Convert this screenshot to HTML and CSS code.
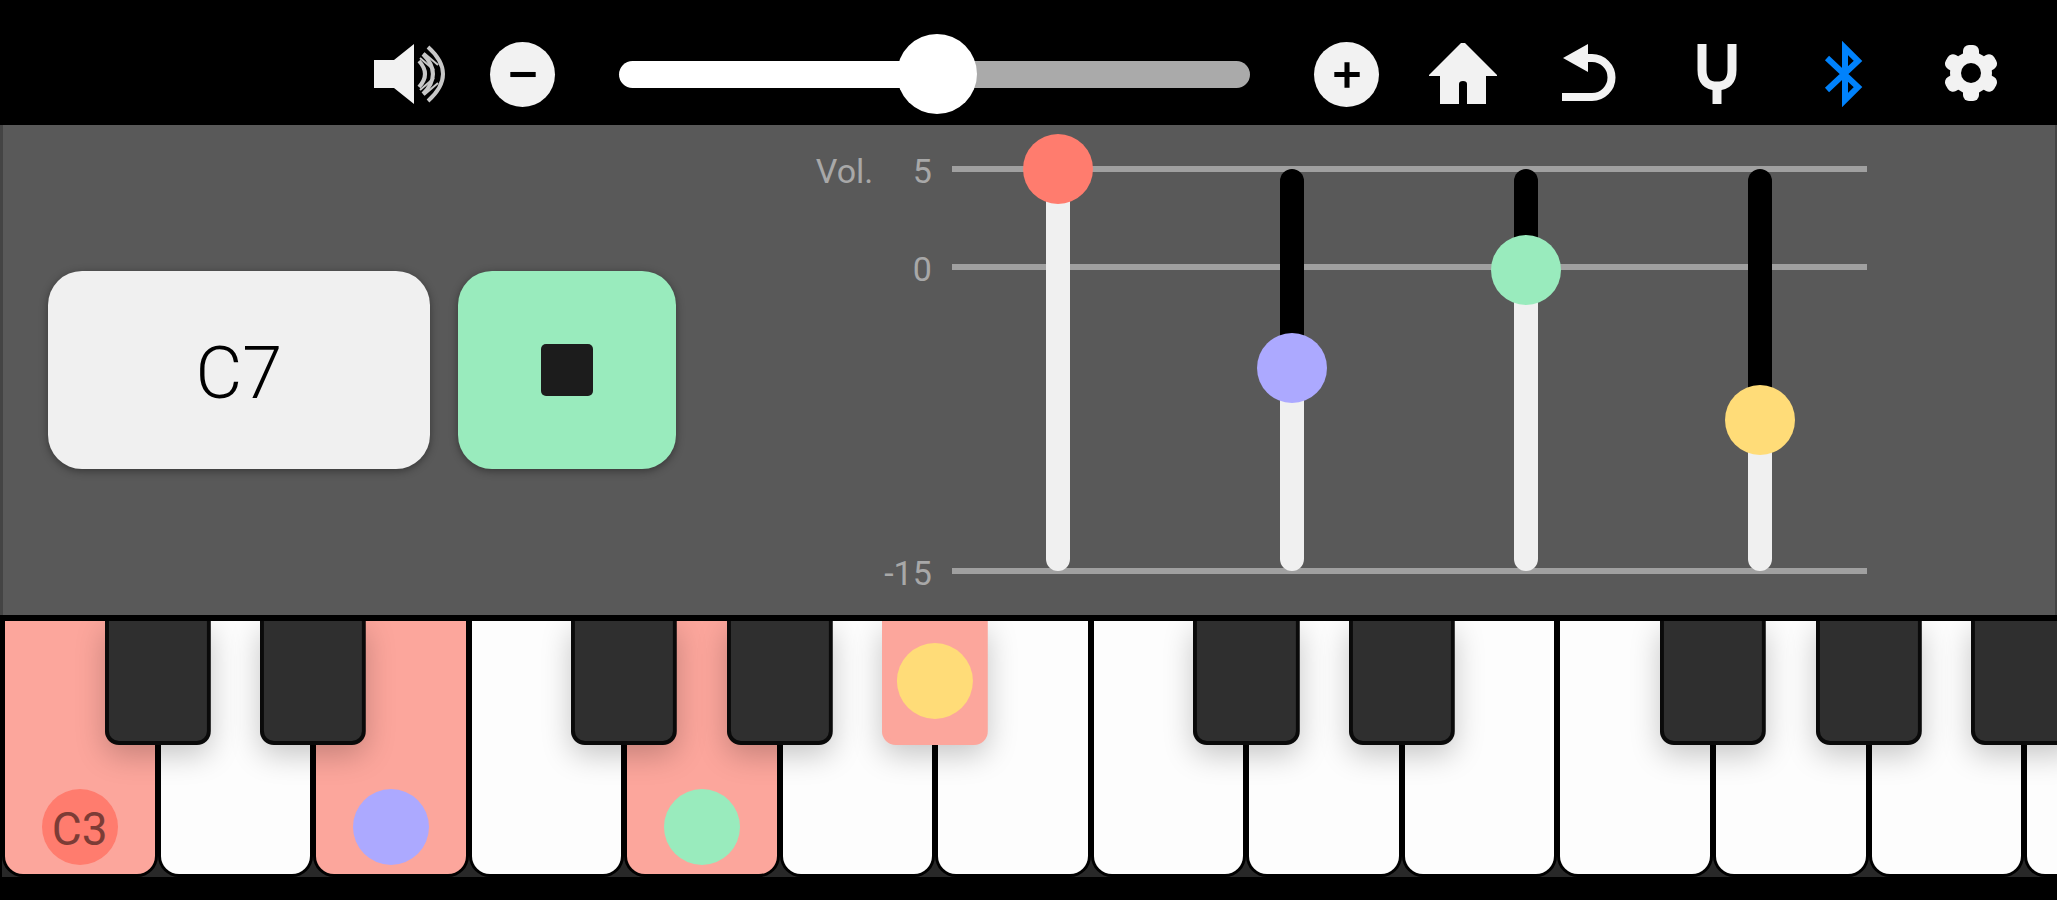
FILE: index.html
```html
<!DOCTYPE html>
<html lang="en">
<head>
    <meta charset="UTF-8">
    <meta name="viewport" content="width=device-width, initial-scale=1.0">
    <title>Piano</title>
    <link rel="stylesheet" href="styles.css">
</head>
<body>
    <header class="toolbar">
        <svg class="speaker" viewBox="0 0 74 66" aria-hidden="true">
            <path d="M0 19h20L40 3v60L20 47H0z" fill="#f2f2f2"/>
            <path d="M45 20q12 13 0 26M49 13q20 20 0 40M54 6q30 27 0 54" fill="none" stroke="#c8c8c8" stroke-width="4"/>
            <path d="M46 17l14 12M50 12l14 12M46 49l14-12M50 54l14-12" stroke="#c8c8c8" stroke-width="2"/>
        </svg>
        <button class="round" aria-label="Volume down">
            <svg viewBox="0 0 64 64"><path d="M20 32h25" stroke="#000" stroke-width="5"/></svg>
        </button>
        <input class="volume" type="range" min="0" max="100" step="0.5" value="50.5" aria-label="Master volume">
        <button class="round" aria-label="Volume up">
            <svg viewBox="0 0 64 64"><path d="M20 32h25M32.500 20v25" stroke="#000" stroke-width="5"/></svg>
        </button>
        <nav class="actions">
            <button aria-label="Home">
                <svg viewBox="0 0 70 66"><path d="M33 2h4l32 32v1H58v28H39V43q0-3-4-3t-4 3v20H12V35H1v-1z" fill="#f2f2f2"/></svg>
            </button>
            <button aria-label="Undo">
                <svg viewBox="0 0 70 66">
                    <path d="M32 17h5a19 19 0 0 1 0 39H7" fill="none" stroke="#f2f2f2" stroke-width="8"/>
                    <path d="M8 17L33 3v28z" fill="#f2f2f2"/>
                </svg>
            </button>
            <button aria-label="Tuning">
                <svg viewBox="0 0 70 66"><path d="M20 3v26q0 16 15 16t15-16V3M35 44v19" fill="none" stroke="#f2f2f2" stroke-width="9"/></svg>
            </button>
            <button aria-label="Bluetooth">
                <svg viewBox="0 0 70 66"><path d="M18 17l31 29-13 13V7l13 13-31 29" fill="none" stroke="#0082fc" stroke-width="6" stroke-miterlimit="8"/></svg>
            </button>
            <button aria-label="Settings">
                <svg viewBox="0 0 70 66">
                    <g fill="#f2f2f2">
                        <circle cx="35" cy="32" r="21"/>
                        <rect x="27" y="4" width="16" height="56" rx="6"/>
                        <rect x="27" y="4" width="16" height="56" rx="6" transform="rotate(60 35 32)"/>
                        <rect x="27" y="4" width="16" height="56" rx="6" transform="rotate(120 35 32)"/>
                    </g>
                    <circle cx="35" cy="32" r="10" fill="#000"/>
                </svg>
            </button>
        </nav>
    </header>

    <main class="panel">
        <button class="pad chord">C7</button>
        <button class="pad stop" aria-label="Stop"><span class="stop-icon"></span></button>
        <section class="mixer">
            <div class="scale">
                <div class="scale-row"><span>Vol.</span><span class="value">5</span><hr></div>
                <div class="scale-row"><span></span><span class="value">0</span><hr></div>
                <div class="scale-row"><span></span><span class="value">-15</span><hr></div>
            </div>
            <div class="faders">
                <div class="fader red" style="--level: 100%"><input type="range" min="-15" max="5" step="0.1" value="5" aria-label="Root volume"></div>
                <div class="fader purple" style="--level: 50.5%"><input type="range" min="-15" max="5" step="0.1" value="-4.9" aria-label="Third volume"></div>
                <div class="fader green" style="--level: 75%"><input type="range" min="-15" max="5" step="0.1" value="0" aria-label="Fifth volume"></div>
                <div class="fader yellow" style="--level: 37.5%"><input type="range" min="-15" max="5" step="0.1" value="-7.5" aria-label="Seventh volume"></div>
            </div>
        </section>
    </main>

    <div class="keyboard">
        <div class="slot"><button class="white on"><span class="dot red">C3</span></button><button class="black" aria-label="C#3"></button></div>
        <div class="slot"><button class="white" aria-label="D3"></button><button class="black" aria-label="D#3"></button></div>
        <div class="slot"><button class="white on" aria-label="E3"><span class="dot purple"></span></button></div>
        <div class="slot"><button class="white" aria-label="F3"></button><button class="black" aria-label="F#3"></button></div>
        <div class="slot"><button class="white on" aria-label="G3"><span class="dot green"></span></button><button class="black" aria-label="G#3"></button></div>
        <div class="slot"><button class="white" aria-label="A3"></button><button class="black on" aria-label="A#3"><span class="dot yellow"></span></button></div>
        <div class="slot"><button class="white" aria-label="B3"></button></div>
        <div class="slot"><button class="white" aria-label="C4"></button><button class="black" aria-label="C#4"></button></div>
        <div class="slot"><button class="white" aria-label="D4"></button><button class="black" aria-label="D#4"></button></div>
        <div class="slot"><button class="white" aria-label="E4"></button></div>
        <div class="slot"><button class="white" aria-label="F4"></button><button class="black" aria-label="F#4"></button></div>
        <div class="slot"><button class="white" aria-label="G4"></button><button class="black" aria-label="G#4"></button></div>
        <div class="slot"><button class="white" aria-label="A4"></button><button class="black" aria-label="A#4"></button></div>
        <div class="slot"><button class="white cut" aria-label="B4"></button></div>
    </div>
</body>
</html>
```

FILE: styles.css
```css
* {
    box-sizing: border-box;
}
body {
    margin: 0;
    min-height: 100vh;
    background-color: #000;
    font-family: Roboto, 'Liberation Sans', sans-serif;
}
button {
    border: none;
    padding: 0;
    background: none;
    font-family: inherit;
    cursor: pointer;
}
svg {
    display: block;
}
.red {
    --color: #ff7c6e;
}
.purple {
    --color: #aca9ff;
}
.green {
    --color: #99ebbd;
}
.yellow {
    --color: #ffdc78;
}

/* Toolbar */
.toolbar {
    display: flex;
    align-items: center;
    height: 125px;
    padding: 23px 51px 0 18.2%;
}
.speaker {
    width: 74px;
    height: 66px;
    margin-right: 42px;
}
.round {
    width: 65px;
    height: 65px;
    border-radius: 50%;
    background-color: #f2f2f2;
}
.volume {
    flex: 1;
    min-width: 0;
    height: 80px;
    margin: 0 64px;
    appearance: none;
    background: none;
}
.volume::-webkit-slider-runnable-track {
    height: 27px;
    border-radius: 14px;
    background: linear-gradient(to right, #fff 50%, #aaa 50%);
}
.volume::-webkit-slider-thumb {
    appearance: none;
    width: 80px;
    height: 80px;
    margin-top: -27px;
    border-radius: 50%;
    background-color: #fff;
}
.actions {
    display: flex;
    gap: 57px;
    margin-left: 49px;
}
.actions svg {
    width: 70px;
    height: 66px;
}

/* Chord and mixer panel */
.panel {
    display: grid;
    grid-template-columns: 21fr 12fr 64fr;
    column-gap: 28px;
    align-items: center;
    height: 490px;
    padding: 0 188px 0 45px;
    border: solid #444;
    border-width: 0 2px 0 3px;
    background-color: #595959;
}
.pad {
    display: flex;
    align-items: center;
    justify-content: center;
    height: 198px;
    border-radius: 34px;
    box-shadow: 0 2px 8px rgba(0, 0, 0, 0.4);
}
.chord {
    padding-top: 6px;
    background-color: #f0f0f0;
    color: #000;
    font-size: 72px;
    font-weight: 300;
}
.stop {
    background-color: #99ebbd;
}
.stop-icon {
    width: 52px;
    height: 52px;
    border-radius: 5px;
    background-color: #1c1c1c;
}
.mixer {
    display: grid;
    margin-left: 112px;
}
.scale, .faders {
    grid-area: 1 / 1;
}
.scale {
    display: grid;
    grid-template-rows: 98px 304px 46px;
    align-items: start;
    padding-top: 12px;
}
.scale-row {
    display: grid;
    grid-template-columns: 62px 54px 1fr;
    align-items: center;
    color: #a8a8a8;
    font-size: 34px;
    line-height: 42px;
}
.scale-row span {
    padding-top: 4px;
}
.value {
    text-align: right;
}
.scale-row hr {
    width: calc(100% - 20px);
    height: 6px;
    margin: 0 0 0 20px;
    border: none;
    background-color: #a0a0a0;
}
.faders {
    display: flex;
    justify-content: space-between;
    padding: 0 72px 0 207px;
}
.fader {
    display: grid;
    width: 70px;
    height: 472px;
}
.fader::before {
    content: "";
    grid-area: 1 / 1;
    justify-self: center;
    width: 24px;
    margin: 35px 0;
    border-radius: 12px;
    background: linear-gradient(to top, #f0f0f0 var(--level), #000 var(--level));
}
.fader input {
    grid-area: 1 / 1;
    width: 70px;
    height: 472px;
    margin: 0;
    appearance: none;
    background: none;
    writing-mode: vertical-lr;
    direction: rtl;
}
.fader input::-webkit-slider-thumb {
    appearance: none;
    width: 70px;
    height: 70px;
    border-radius: 50%;
    background-color: var(--color);
}

/* Keyboard */
.keyboard {
    display: grid;
    grid-template-columns: repeat(13, 5fr) 1fr;
    column-gap: 6px;
    padding: 0 0 3px 3px;
    border-top: 6px solid #000;
    border-left: 2px solid #000;
    background-color: #282828;
    overflow: hidden;
}
.slot {
    position: relative;
    height: 253px;
}
.white {
    display: flex;
    align-items: flex-end;
    justify-content: center;
    width: 100%;
    height: 100%;
    padding-bottom: 9px;
    border-radius: 0 0 18px 18px;
    background-color: #fdfdfd;
    box-shadow: 0 0 0 3px #000;
}
.white.cut {
    border-radius: 0 0 0 18px;
}
/* sits over the gap between two white keys */
.black {
    position: absolute;
    z-index: 1;
    top: 0;
    left: 102%;
    transform: translateX(-50%);
    display: flex;
    justify-content: center;
    width: 71%;
    height: 124px;
    border: solid #0a0a0a;
    border-width: 0 4px 4px;
    border-radius: 0 0 14px 14px;
    background-color: #2f2f2f;
    box-shadow: 0 10px 30px rgba(0, 0, 0, 0.22);
}
.white.on, .black.on {
    background-color: #fca69c;
}
.black.on {
    border-color: #fca69c;
    padding-top: 22px;
}
.dot {
    display: block;
    flex: none;
    width: 76px;
    height: 76px;
    border-radius: 50%;
    background-color: var(--color);
    color: #7c3c36;
    font-size: 46px;
    line-height: 80px;
    text-align: center;
}
```
